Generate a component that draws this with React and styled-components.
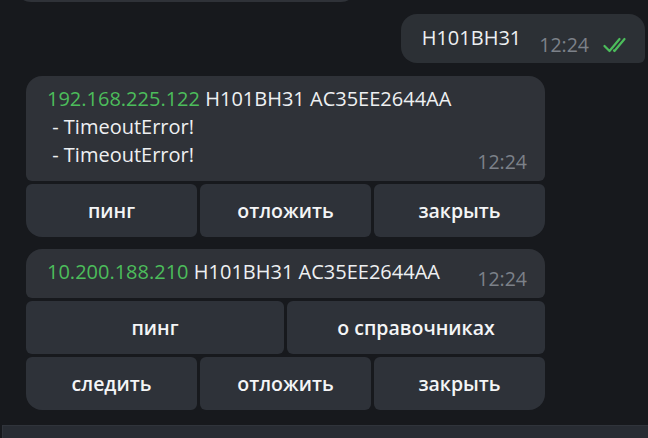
import React from "react";
import styled, { createGlobalStyle, css } from "styled-components";

const GlobalStyle = createGlobalStyle`
  html, body {
    margin: 0;
    background: #17191d;
    overflow: hidden;
  }
  body {
    font-family: "Open Sans", "Noto Sans", sans-serif;
  }
`;

const Page = styled.div`
  height: 438px;
  display: flex;
  flex-direction: column;
  overflow: hidden;
`;

const Feed = styled.div`
  display: flex;
  flex-direction: column;
`;

// bottom of the message above, cut off by the top of the window
const PrevBubble = styled.div`
  margin: -38px 0 0 15px;
  width: 342px;
  height: 40px;
  border-radius: 16px;
  background: #2f3238;
`;

const OutRow = styled.div`
  display: flex;
  justify-content: flex-end;
  margin-top: 12px;
  padding-right: 3px;
`;

const OutBubble = styled.div`
  display: flex;
  align-items: flex-end;
  padding: 10px 14px 11px 21px;
  border-radius: 16px 16px 6px 16px;
  background: #2c3035;
`;

const Text = styled.div`
  flex: 1;
  font-size: 20px;
  line-height: 28px;
  color: #eef0f2;
  white-space: pre;
`;

const Ip = styled.span`
  color: #4cbd5b;
`;

const Time = styled.span`
  font-size: 19.5px;
  line-height: 14px;
  color: #7c8189;
  margin-left: ${p => p.$gap || 12}px;
`;

const Ticks = styled.svg`
  width: 28px;
  height: 16px;
  margin: 0 0 0 14px;
  flex: none;
  position: relative;
  top: 1px;
`;

const Group = styled.div`
  width: 519px;
  margin: ${p => (p.$first ? 13 : 12)}px 0 0 26px;
  display: flex;
  flex-direction: column;
  gap: 3px;
`;

const Bubble = styled.div`
  display: flex;
  align-items: flex-end;
  padding: 9px 18px 12px 21px;
  border-radius: 16px 16px 6px 6px;
  background: #2f3238;
`;

const KeyRow = styled.div`
  display: grid;
  grid-template-columns: repeat(${p => p.$cols}, 1fr);
  gap: 3px;
  ${p => p.$last && css`
    & > :first-child { border-bottom-left-radius: 16px; }
    & > :last-child { border-bottom-right-radius: 16px; }
  `}
`;

const Key = styled.div`
  height: 53px;
  display: flex;
  align-items: center;
  justify-content: center;
  border-radius: 6px;
  background: #2e3239;
  color: #f4f5f6;
  font-size: 19.5px;
  font-weight: 600;
`;

const InputBar = styled.div`
  margin: auto 0 0 2px;
  height: 12px;
  background: #282c33;
  border-top: 1px solid #30343b;
  border-left: 1px solid #30343b;
`;

const Check = () => (
  <Ticks viewBox="0 0 28 16">
    <path d="M1.5 9 L6.5 14 L16.5 2" fill="none" stroke="#4cbd5b" strokeWidth="2.2" strokeLinecap="round" strokeLinejoin="round" />
    <path d="M11 13.5 L11.5 14 L21.5 2" fill="none" stroke="#4cbd5b" strokeWidth="2.2" strokeLinecap="round" strokeLinejoin="round" />
  </Ticks>
);

const Message = ({ ip, body, rows, first }) => (
  <Group $first={first}>
    <Bubble>
      <Text>
        <Ip>{ip}</Ip> {body}
      </Text>
      <Time>12:24</Time>
    </Bubble>
    {rows.map((row, i) => (
      <KeyRow key={i} $cols={row.length} $last={i === rows.length - 1}>
        {row.map(label => <Key key={label}>{label}</Key>)}
      </KeyRow>
    ))}
  </Group>
);

export default function App() {
  return (
    <Page>
      <GlobalStyle />
      <Feed>
        <PrevBubble />
        <OutRow>
          <OutBubble>
            <Text>H101BH31</Text>
            <Time $gap={18}>12:24</Time>
            <Check />
          </OutBubble>
        </OutRow>
        <Message
          first
          ip="192.168.225.122"
          body={"H101BH31 AC35EE2644AA\n - TimeoutError!\n - TimeoutError!"}
          rows={[["пинг", "отложить", "закрыть"]]}
        />
        <Message
          ip="10.200.188.210"
          body="H101BH31 AC35EE2644AA"
          rows={[["пинг", "о справочниках"], ["следить", "отложить", "закрыть"]]}
        />
      </Feed>
      <InputBar />
    </Page>
  );
}
